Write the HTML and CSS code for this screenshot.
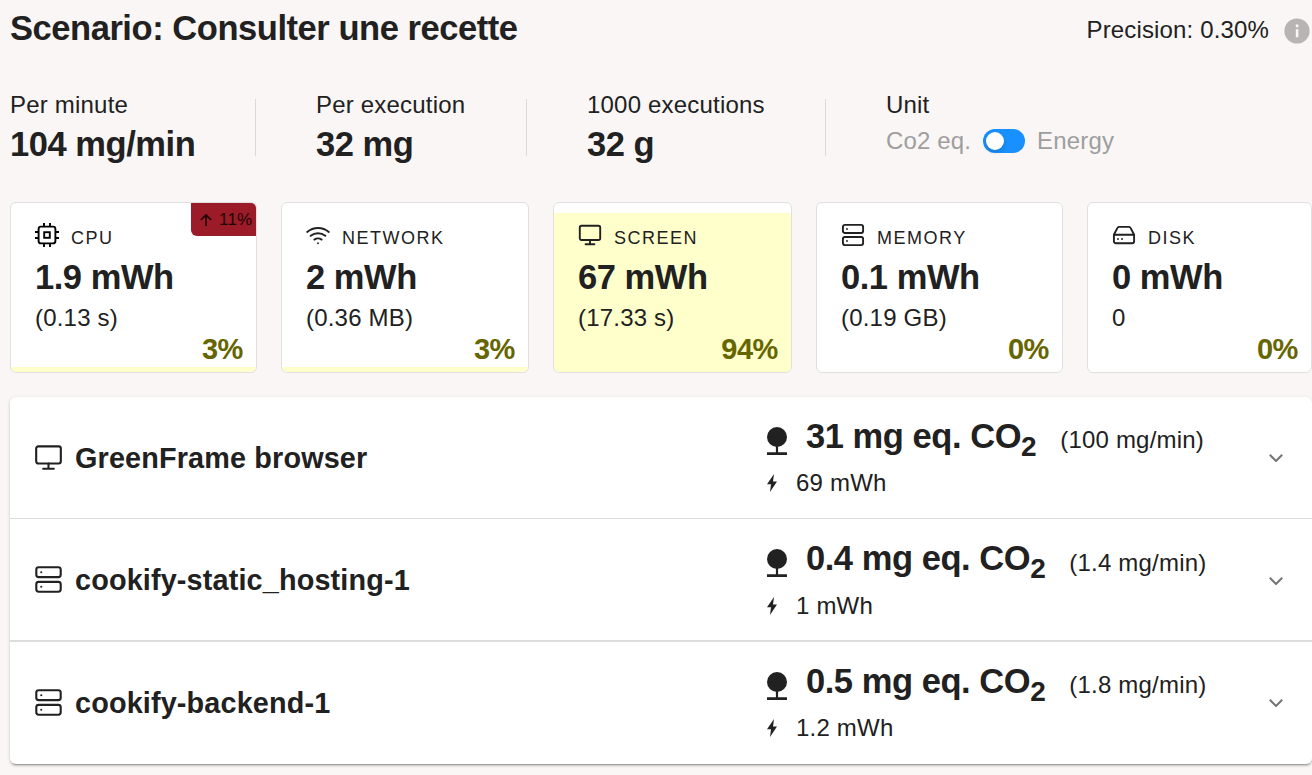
FILE: index.html
```html
<!DOCTYPE html>
<html lang="en">
<head>
<meta charset="utf-8">
<title>Scenario: Consulter une recette</title>
<link rel="stylesheet" href="styles.css">
</head>
<body>
<svg class="defs" width="0" height="0">
  <symbol id="cpu" viewBox="0 0 24 24"><rect x="3.6" y="3.6" width="16.8" height="16.8" rx="2.4"/><rect x="9.2" y="9.2" width="5.6" height="5.6"/><path d="M9 0v3.6M15 0v3.6M9 20.4V24M15 20.4V24M0 9h3.6M0 15h3.6M20.4 9H24M20.4 15H24"/></symbol>
  <symbol id="wifi" viewBox="0 0 24 24"><path d="M1.2 9A16.6 16.6 0 0 1 22.8 9M4.7 12.8A12 12 0 0 1 19.3 12.8M8.4 16.6A6.4 6.4 0 0 1 15.6 16.6M12 20.2h.01" stroke-linecap="round"/></symbol>
  <symbol id="screen" viewBox="0 0 24 24"><rect x="1.8" y="2.8" width="20.4" height="14.2" rx="1.8"/><path d="M12 17v4.3M7.6 21.3h8.8" stroke-linecap="round"/></symbol>
  <symbol id="server" viewBox="0 0 24 24"><rect x="1.9" y="1.9" width="20.2" height="8.1" rx="2"/><rect x="1.9" y="14" width="20.2" height="8.1" rx="2"/><path d="M6 6h.01M6 18h.01" stroke-linecap="round"/></symbol>
  <symbol id="disk" viewBox="0 0 24 24"><path d="M1.9 11.8L5.3 5.1A2 2 0 0 1 7.1 3.9h9.8a2 2 0 0 1 1.8 1.2l3.4 6.7v6.4a2 2 0 0 1-2 2H3.9a2 2 0 0 1-2-2zM1.9 11.8h20.2M6 16h.01M10 16h.01" stroke-linecap="round" stroke-linejoin="round"/></symbol>
  <symbol id="tree" viewBox="0 0 20 28"><circle cx="10" cy="10" r="10"/><path d="M8.9 19h2.2v6.2h8.9V28H0v-2.8h8.9z"/></symbol>
  <symbol id="bolt" viewBox="0 0 10 18"><path d="M7 0L0 10.3h4L3 18l7-10.4H6z"/></symbol>
  <symbol id="chevron" viewBox="0 0 14 8"><path d="M.8.8L7 7 13.2.8" fill="none" stroke="#757575" stroke-width="2"/></symbol>
</svg>
<main class="page">
  <header class="header">
    <h1 class="title">Scenario: Consulter une recette</h1>
    <div class="precision"><span>Precision: 0.30%</span>
      <svg class="info" viewBox="0 0 26 26"><circle cx="13" cy="13" r="12.6" fill="#b7b5b4"/><path d="M11.8 6.6h2.6v2.6h-2.6zM11.8 11.3h2.6v8h-2.6z" fill="#faf6f5"/></svg>
    </div>
  </header>
  <section class="stats">
    <div class="stat minute"><p class="label">Per minute</p><p class="big">104 mg/min</p></div>
    <div class="stat execution"><p class="label">Per execution</p><p class="big">32 mg</p></div>
    <div class="stat thousand"><p class="label">1000 executions</p><p class="big">32 g</p></div>
    <div class="stat"><p class="label">Unit</p><div class="unit"><span>Co2 eq.</span><span class="switch"><span class="knob"></span></span><span>Energy</span></div></div>
  </section>
  <section class="cards">
    <article class="card low">
      <div class="kind"><svg class="icon dark"><use href="#cpu"/></svg><span>CPU</span></div>
      <p class="big">1.9 mWh</p><p class="detail">(0.13 s)</p><p class="share">3%</p>
      <div class="badge"><svg class="arrow" viewBox="0 0 12 12"><path d="M6 12V1.2M.8 6L6 .9 11.2 6" fill="none" stroke="currentColor" stroke-width="1.7"/></svg><span>11%</span></div>
    </article>
    <article class="card low">
      <div class="kind"><svg class="icon"><use href="#wifi"/></svg><span>NETWORK</span></div>
      <p class="big">2 mWh</p><p class="detail">(0.36 MB)</p><p class="share">3%</p>
    </article>
    <article class="card high">
      <div class="kind"><svg class="icon"><use href="#screen"/></svg><span>SCREEN</span></div>
      <p class="big">67 mWh</p><p class="detail">(17.33 s)</p><p class="share">94%</p>
    </article>
    <article class="card">
      <div class="kind"><svg class="icon"><use href="#server"/></svg><span>MEMORY</span></div>
      <p class="big">0.1 mWh</p><p class="detail">(0.19 GB)</p><p class="share">0%</p>
    </article>
    <article class="card">
      <div class="kind"><svg class="icon"><use href="#disk"/></svg><span>DISK</span></div>
      <p class="big">0 mWh</p><p class="detail">0</p><p class="share">0%</p>
    </article>
  </section>
  <section class="containers">
    <div class="row">
      <svg class="rowicon"><use href="#screen"/></svg><h2 class="name">GreenFrame browser</h2>
      <div class="figures">
        <div class="co2"><svg class="tree"><use href="#tree"/></svg><span class="big">31 mg eq. CO<sub>2</sub></span><span class="rate">(100 mg/min)</span></div>
        <div class="energy"><svg class="bolt"><use href="#bolt"/></svg><span>69 mWh</span></div>
      </div>
      <svg class="chevron"><use href="#chevron"/></svg>
    </div>
    <div class="row middle">
      <svg class="rowicon"><use href="#server"/></svg><h2 class="name">cookify-static_hosting-1</h2>
      <div class="figures">
        <div class="co2"><svg class="tree"><use href="#tree"/></svg><span class="big">0.4 mg eq. CO<sub>2</sub></span><span class="rate">(1.4 mg/min)</span></div>
        <div class="energy"><svg class="bolt"><use href="#bolt"/></svg><span>1 mWh</span></div>
      </div>
      <svg class="chevron"><use href="#chevron"/></svg>
    </div>
    <div class="row">
      <svg class="rowicon"><use href="#server"/></svg><h2 class="name">cookify-backend-1</h2>
      <div class="figures">
        <div class="co2"><svg class="tree"><use href="#tree"/></svg><span class="big">0.5 mg eq. CO<sub>2</sub></span><span class="rate">(1.8 mg/min)</span></div>
        <div class="energy"><svg class="bolt"><use href="#bolt"/></svg><span>1.2 mWh</span></div>
      </div>
      <svg class="chevron"><use href="#chevron"/></svg>
    </div>
  </section>
</main>
</body>
</html>
```
FILE: styles.css
```css
* { box-sizing: border-box; }
body { margin: 0; background: #faf6f5; color: #212121; font-family: "Liberation Sans", Arial, sans-serif; font-size: 24px; letter-spacing: 0.2px; overflow: hidden; }
p, h1, h2 { margin: 0; }
svg { display: block; flex: none; }
.defs { position: absolute; }
.page { height: 775px; padding-left: 10px; overflow: hidden; }
.header { display: flex; justify-content: space-between; height: 90px; padding: 8px 2px 0 0; }
.title, .big { font-size: 34.5px; font-weight: 700; line-height: 40px; letter-spacing: -0.45px; white-space: nowrap; }
.precision { display: flex; gap: 15px; height: 45px; align-items: center; line-height: 28px; letter-spacing: 0.15px; }
.precision span { padding-bottom: 2px; }
.info { width: 26px; height: 26px; }
.stats { display: flex; height: 112px; }
.stat { height: 66px; border-right: 1px solid transparent; background: linear-gradient(#dcd9d8, #dcd9d8) no-repeat right 9px / 1px 57px; background-origin: border-box; margin-right: 60px; }
.stat:last-child { background: none; margin: 0; }
.minute { width: 246px; }
.execution { width: 211px; }
.thousand { width: 239px; }
.label { line-height: 30px; }
.stats .big { margin-top: 4px; }
.unit { display: flex; align-items: center; gap: 12px; height: 42px; color: #9e9e9e; letter-spacing: 0.15px; }
.switch { width: 42px; height: 24px; padding: 3px; border-radius: 12px; background: #1890ff; }
.knob { display: block; width: 18px; height: 18px; border-radius: 50%; background: #fff; box-shadow: 0 2px 4px rgba(0, 35, 11, .2); }
.cards { display: grid; grid-template-columns: 247px 248px 239px 247px 225px; gap: 24px; height: 171px; }
.card { position: relative; border: 1px solid #e0e0e0; border-radius: 6px; padding: 20px 13px 0 24px; background: #fff; overflow: hidden; }
.low { background: linear-gradient(#ffc, #ffc) no-repeat bottom / 100% 5px #fff; }
.high { background: linear-gradient(#ffc, #ffc) no-repeat bottom / 100% 159px #fff; }
.kind { display: flex; gap: 12px; height: 32px; font-size: 18px; letter-spacing: 1.5px; line-height: 30px; }
.icon { width: 24px; height: 24px; fill: none; stroke: #212121; stroke-width: 1.9; }
.dark { stroke: #000; }
.card .big { margin-top: 2px; }
.detail { line-height: 28px; margin-top: 7px; }
.share { color: #660; font-size: 29px; font-weight: 700; line-height: 32px; text-align: right; margin-top: 1px; letter-spacing: -0.4px; }
.badge { position: absolute; top: 0; right: 0; width: 65px; height: 33px; display: flex; align-items: center; gap: 7px; padding-left: 9px; background: #9b1b28; color: #210306; border-radius: 0 0 0 6px; font-size: 17px; letter-spacing: 0.2px; }
.arrow { width: 12px; height: 12px; }
.containers { margin-top: 24px; height: 367px; background: #fff; border-radius: 6px; box-shadow: 0 3px 1px -2px rgba(0,0,0,.2), 0 2px 2px rgba(0,0,0,.14), 0 1px 4px rgba(0,0,0,.12); }
.row { display: flex; height: 122px; padding-left: 24px; border-bottom: 1px solid #dcdcdc; }
.middle { height: 123px; border-width: 2px; }
.row:last-child { border: 0; }
.rowicon { width: 29px; height: 29px; margin-top: 46px; fill: none; stroke: #212121; stroke-width: 1.75; }
.name { width: 680px; margin: 44px 0 0 12px; font-size: 28.8px; line-height: 34px; letter-spacing: 0.15px; }
.figures { width: 490px; margin: 19px 0 0 12px; }
.co2 { display: flex; height: 53px; }
.middle .co2 { height: 54px; }
.tree { width: 20px; height: 28px; margin-top: 11px; fill: #212121; }
.co2 .big { margin-left: 19px; }
sub { font-size: 28px; line-height: 0; vertical-align: -8px; }
.rate { margin: 9px 0 0 24px; line-height: 30px; }
.middle .rate { margin-top: 10px; }
.energy { display: flex; gap: 19px; line-height: 28px; }
.bolt { width: 10px; height: 18px; margin-top: 5px; fill: #212121; }
.chevron { width: 14px; height: 8px; margin: 57px 0 0 12px; }
.middle .chevron { margin-top: 58px; }
```
